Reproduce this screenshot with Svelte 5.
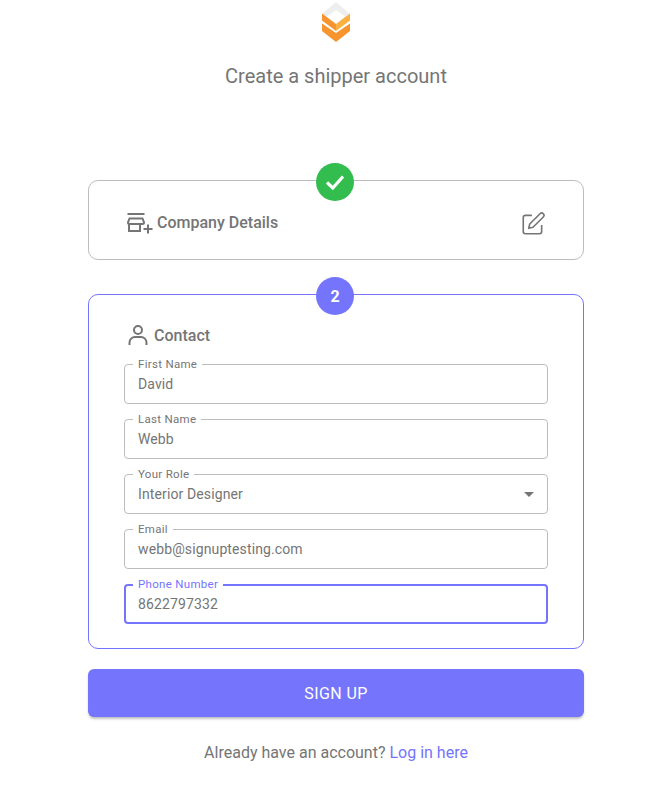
<script>
  const fields = [
    { label: 'First Name', value: 'David' },
    { label: 'Last Name', value: 'Webb' },
    { label: 'Your Role', value: 'Interior Designer', select: true },
    { label: 'Email', value: 'webb@signuptesting.com' },
    { label: 'Phone Number', value: '8622797332', focused: true }
  ];
</script>

<main class="page">
  <svg class="logo" width="30" height="42" viewBox="0 0 30 42" aria-hidden="true">
    <path d="M15 2 29 14 15 25 1 14Z" fill="#eeeeee" />
    <path d="M15 10 24 16.500 15 24 6 16.500Z" fill="#ffffff" />
    <path d="M1 13.500 15 24V31L1 20.500Z" fill="#f7942d" />
    <path d="M29 13.500 15 24V31L29 20.500Z" fill="#fbb040" />
    <path d="M1 23.500 15 33 29 23.500V31L15 42 1 31Z" fill="#f7942d" />
  </svg>
  <h1>Create a shipper account</h1>

  <section class="card done">
    <span class="badge green">
      <svg width="24" height="24" viewBox="0 0 24 24" fill="none" stroke="#fff" stroke-width="3.2">
        <path d="M4 12.500 9.800 18 20 6.500" />
      </svg>
    </span>
    <div class="heading">
      <svg width="26" height="26" viewBox="0 0 26 26" fill="none" stroke="#757575" stroke-width="2">
        <path d="M0.500 5H17.500" />
        <path d="M2.500 9.500H15.500L17 13.500C17 14.500 16.500 15 15.500 15H2.500C1.500 15 1 14.500 1 13.500Z" />
        <path d="M2 15V22H13V15" />
        <path d="M21 15.500V24.500M16.500 20H25.500" />
      </svg>
      <span>Company Details</span>
    </div>
    <svg class="edit" width="26" height="26" viewBox="0 0 24 24" fill="none" stroke="#757575" stroke-width="1.500" stroke-linejoin="round">
      <path d="M11 4H5a2 2 0 0 0-2 2v13a2 2 0 0 0 2 2h13a2 2 0 0 0 2-2v-6" />
      <path d="M18.500 2.500a2.100 2.100 0 0 1 3 3L12 15l-4 1 1-4Z" />
    </svg>
  </section>

  <section class="card active">
    <span class="badge purple">2</span>
    <div class="heading contact">
      <svg width="24" height="24" viewBox="0 0 24 24" fill="none" stroke="#757575" stroke-width="2">
        <circle cx="12" cy="7" r="4" />
        <path d="M3.500 22v-2.500a5.500 5.500 0 0 1 5.500-5.500h6a5.500 5.500 0 0 1 5.500 5.500V22" />
      </svg>
      <span>Contact</span>
    </div>
    <div class="fields">
      {#each fields as field}
        <div class="field" class:focused={field.focused}>
          <span class="label">{field.label}</span>
          <input type="text" value={field.value} readonly aria-label={field.label} />
          {#if field.select}
            <span class="arrow"></span>
          {/if}
        </div>
      {/each}
    </div>
  </section>

  <button class="submit" type="button">Sign up</button>
  <p class="login">Already have an account? <a href="#login">Log in here</a></p>
</main>

<style>
  :global(body) {
    margin: 0;
    background: #fff;
    font-family: Roboto, "Liberation Sans", sans-serif;
  }

  .page {
    width: 496px;
    margin-left: 88px;
    display: flex;
    flex-direction: column;
    align-items: stretch;
    color: #757575;
  }

  .logo {
    align-self: center;
    display: block;
  }

  h1 {
    margin: 21px 0 91px;
    font-size: 20px;
    line-height: 26px;
    font-weight: 400;
    text-align: center;
    color: #757575;
  }

  .card {
    position: relative;
    box-sizing: border-box;
    border: 1px solid #bdbdbd;
    border-radius: 10px;
  }

  .done {
    height: 80px;
    margin-bottom: 34px;
    padding: 4px 37px 0 38px;
    display: flex;
    align-items: center;
    justify-content: space-between;
  }

  .edit {
    margin-top: 4px;
  }

  .active {
    height: 355px;
    border-color: #7474fc;
    padding: 25px 35px 0;
  }

  .badge {
    position: absolute;
    top: -18px;
    left: 227px;
    width: 38px;
    height: 38px;
    border-radius: 50%;
    display: flex;
    align-items: center;
    justify-content: center;
    color: #fff;
    font-size: 16px;
    font-weight: 700;
  }

  .green {
    background: #32bd4e;
  }

  .purple {
    background: #7474fc;
  }

  .heading {
    display: flex;
    align-items: center;
    gap: 4px;
    font-size: 16px;
    font-weight: 500;
    color: #757575;
  }

  .contact {
    padding-left: 2px;
    height: 30px;
    margin-bottom: 14px;
  }

  .fields {
    display: flex;
    flex-direction: column;
    gap: 15px;
  }

  .field {
    position: relative;
    box-sizing: border-box;
    height: 40px;
    padding: 0 13px;
    display: flex;
    align-items: center;
    border: 1px solid #bdbdbd;
    border-radius: 4px;
  }

  .label {
    position: absolute;
    top: -7px;
    left: 8px;
    padding: 0 5px;
    background: #fff;
    font-size: 11.5px;
    line-height: 12px;
    letter-spacing: 0.3px;
    color: #757575;
  }

  input {
    display: block;
    width: 100%;
    box-sizing: border-box;
    padding: 0;
    border: 0;
    outline: 0;
    background: transparent;
    font: inherit;
    font-size: 14px;
    line-height: 20px;
    letter-spacing: 0.12px;
    color: #757575;
  }

  .focused {
    border: 2px solid #7474fc;
    padding: 0 12px;
  }

  .focused .label {
    top: -8px;
    left: 7px;
    color: #7474fc;
  }

  .arrow {
    position: absolute;
    right: 13px;
    top: 17px;
    border-style: solid;
    border-width: 5px 5px 0;
    border-color: #757575 transparent transparent;
  }

  .submit {
    height: 48px;
    margin-top: 20px;
    border: 0;
    border-radius: 6px;
    background: #7474fc;
    box-shadow: 0 3px 3px -2px rgba(0, 0, 0, 0.2), 0 2px 3px rgba(0, 0, 0, 0.14);
    color: #fff;
    font: inherit;
    font-size: 16px;
    letter-spacing: 0.4px;
    text-transform: uppercase;
  }

  .login {
    margin: 26px 0 0;
    font-size: 16px;
    line-height: 20px;
    text-align: center;
    color: #757575;
  }

  .login a {
    color: #7474fc;
    text-decoration: none;
  }
</style>
